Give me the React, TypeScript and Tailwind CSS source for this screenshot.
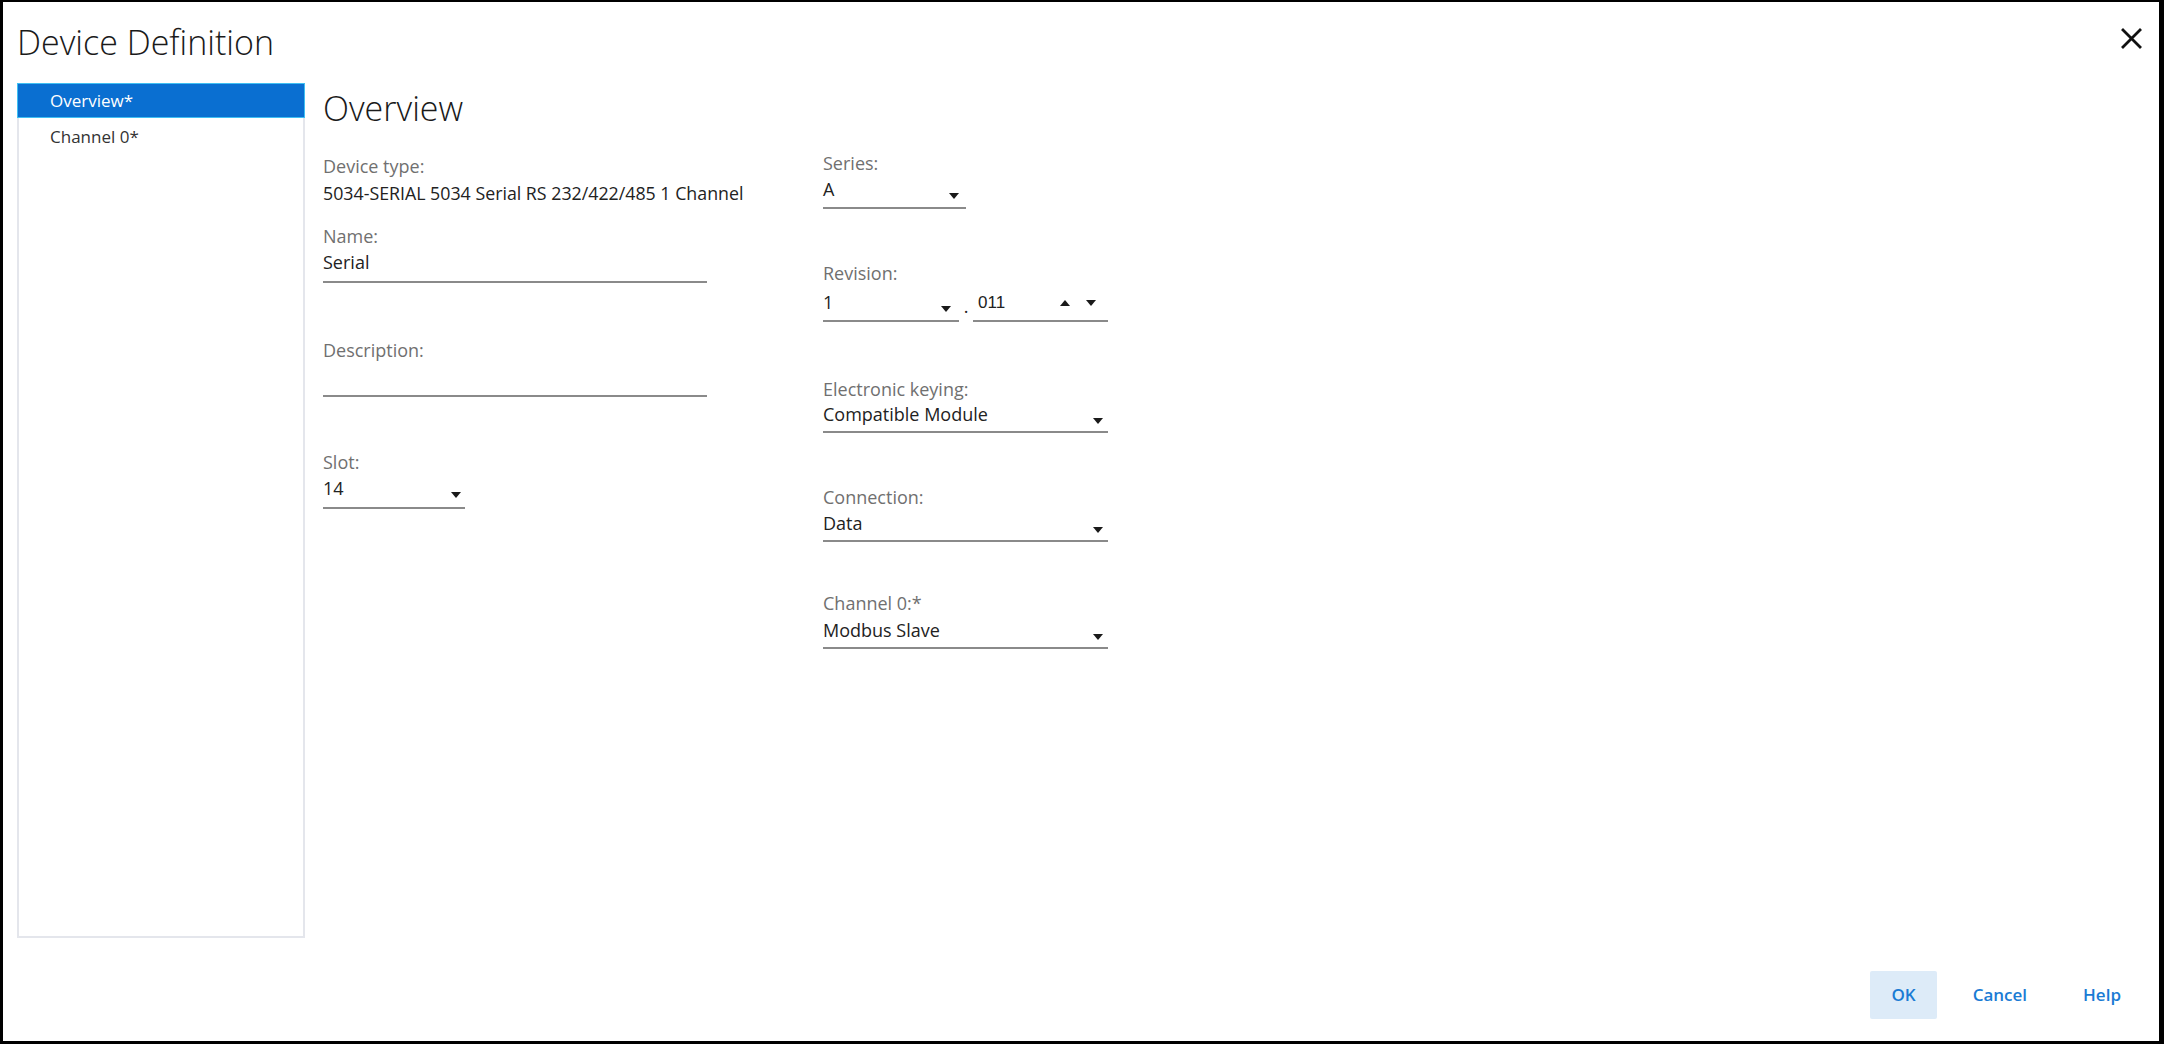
import type { ReactNode } from "react";

const font = "font-['Open_Sans','Noto_Sans',sans-serif]";

// small filled caret used by every dropdown
function Caret({ up = false }: { up?: boolean }) {
  return (
    <svg width="10" height="6" viewBox="0 0 10 6" className="shrink-0">
      <path d={up ? "M0 6h10L5 0z" : "M0 0h10L5 6z"} fill="#1a1a1a" />
    </svg>
  );
}

function Label({ children, className = "" }: { children: ReactNode; className?: string }) {
  return <div className={`text-[18px] leading-[20px] text-[#707070] ${className}`}>{children}</div>;
}

function Select({
  value,
  className,
}: {
  value: string;
  className: string;
}) {
  return (
    <div className={`flex items-end justify-between border-b-2 border-[#8a8a8a] text-[18px] text-[#222] ${className}`}>
      <span>{value}</span>
      <span className="pb-[1px]">
        <Caret />
      </span>
    </div>
  );
}

function CloseIcon() {
  return (
    <svg width="21" height="21" viewBox="0 0 21 21">
      <path d="M2 2l17 17M19 2L2 19" stroke="#111" strokeWidth="2.8" strokeLinecap="square" />
    </svg>
  );
}

export default function App() {
  return (
    <div
      className={`w-[2164px] h-[1044px] bg-white border-l-[3px] border-t-2 border-r-[5px] border-b-[3px] border-black flex flex-col ${font}`}
    >
      {/* title bar */}
      <div className="h-[81px] flex items-start justify-between shrink-0">
        <h1 className="pt-[20px] pl-[14px] text-[34px] leading-[40px] font-light text-[#1a1a1a]">
          Device Definition
        </h1>
        <button className="mt-[26px] mr-[17px]">
          <CloseIcon />
        </button>
      </div>

      <div className="flex-1 flex items-start">
        {/* side navigation */}
        <nav className="ml-[14px] w-[288px] h-[855px] border-2 border-[#e4e6ec] shrink-0">
          <div className="-mx-[2px] -mt-[2px] h-[35px] flex items-center pl-[32px] bg-[#0a6fd1] border border-[#3fc0f3] text-white text-[17px]">
            Overview*
          </div>
          <div className="h-[37px] flex items-center pl-[31px] text-[17px] text-[#333]">Channel 0*</div>
        </nav>

        <main className="ml-[18px] flex flex-col">
          <h2 className="mt-[5px] text-[34px] leading-[40px] font-light text-[#1a1a1a]">Overview</h2>

          <div className="flex">
            {/* left column */}
            <div className="w-[500px] flex flex-col">
              <Label className="mt-[28px]">Device type:</Label>
              <div className="mt-[6px] text-[17.8px] leading-[22px] text-[#222]">
                5034-SERIAL 5034 Serial RS 232/422/485 1 Channel
              </div>

              <Label className="mt-[22px]">Name:</Label>
              <div className="mt-[5px] w-[384px] pb-[8px] border-b-2 border-[#8a8a8a] text-[18px] leading-[22px] text-[#222]">
                Serial
              </div>

              <Label className="mt-[57px]">Description:</Label>
              <div className="mt-[5px] w-[384px] h-[32px] border-b-2 border-[#8a8a8a]" />

              <Label className="mt-[55px]">Slot:</Label>
              <Select value="14" className="mt-[5px] w-[142px] pb-[8px] pr-[4px] leading-[22px]" />
            </div>

            {/* right column */}
            <div className="w-[285px] flex flex-col">
              <Label className="mt-[25px]">Series:</Label>
              <Select value="A" className="mt-[5px] w-[143px] pb-[7px] pr-[7px] leading-[22px]" />

              <Label className="mt-[54px]">Revision:</Label>
              <div className="mt-[8px] flex items-end">
                <Select value="1" className="w-[136px] pb-[7px] pr-[8px] leading-[22px]" />
                <span className="w-[14px] pb-[5px] text-center text-[18px] leading-[22px] text-[#222]">.</span>
                <div className="w-[135px] flex items-end justify-between pb-[6px] pl-[5px] pr-[12px] border-b-2 border-[#8a8a8a]">
                  <span className="font-['Liberation_Sans',sans-serif] text-[17px] leading-[23px] text-[#222]">011</span>
                  <span className="flex items-center gap-[16px] pb-[8px]">
                    <Caret up />
                    <Caret />
                  </span>
                </div>
              </div>

              <Label className="mt-[57px]">Electronic keying:</Label>
              <Select value="Compatible Module" className="mt-[4px] w-[285px] pb-[6px] pr-[5px] leading-[22px]" />

              <Label className="mt-[54px]">Connection:</Label>
              <Select value="Data" className="mt-[5px] w-[285px] pb-[6px] pr-[5px] leading-[22px]" />

              <Label className="mt-[51px]">Channel 0:*</Label>
              <Select value="Modbus Slave" className="mt-[6px] w-[285px] pb-[6px] pr-[5px] leading-[22px]" />
            </div>
          </div>
        </main>
      </div>

      {/* dialog buttons */}
      <div className="shrink-0 flex justify-end gap-4 pr-[18px] pb-[22px]">
        <button className="h-[48px] px-[21px] rounded-[2px] bg-[#ddebf8] text-[#1a7bd4] text-[17px] font-semibold">OK</button>
        <button className="h-[48px] px-5 text-[#1a7bd4] text-[17px] font-semibold">Cancel</button>
        <button className="h-[48px] px-5 text-[#1a7bd4] text-[17px] font-semibold">Help</button>
      </div>
    </div>
  );
}
